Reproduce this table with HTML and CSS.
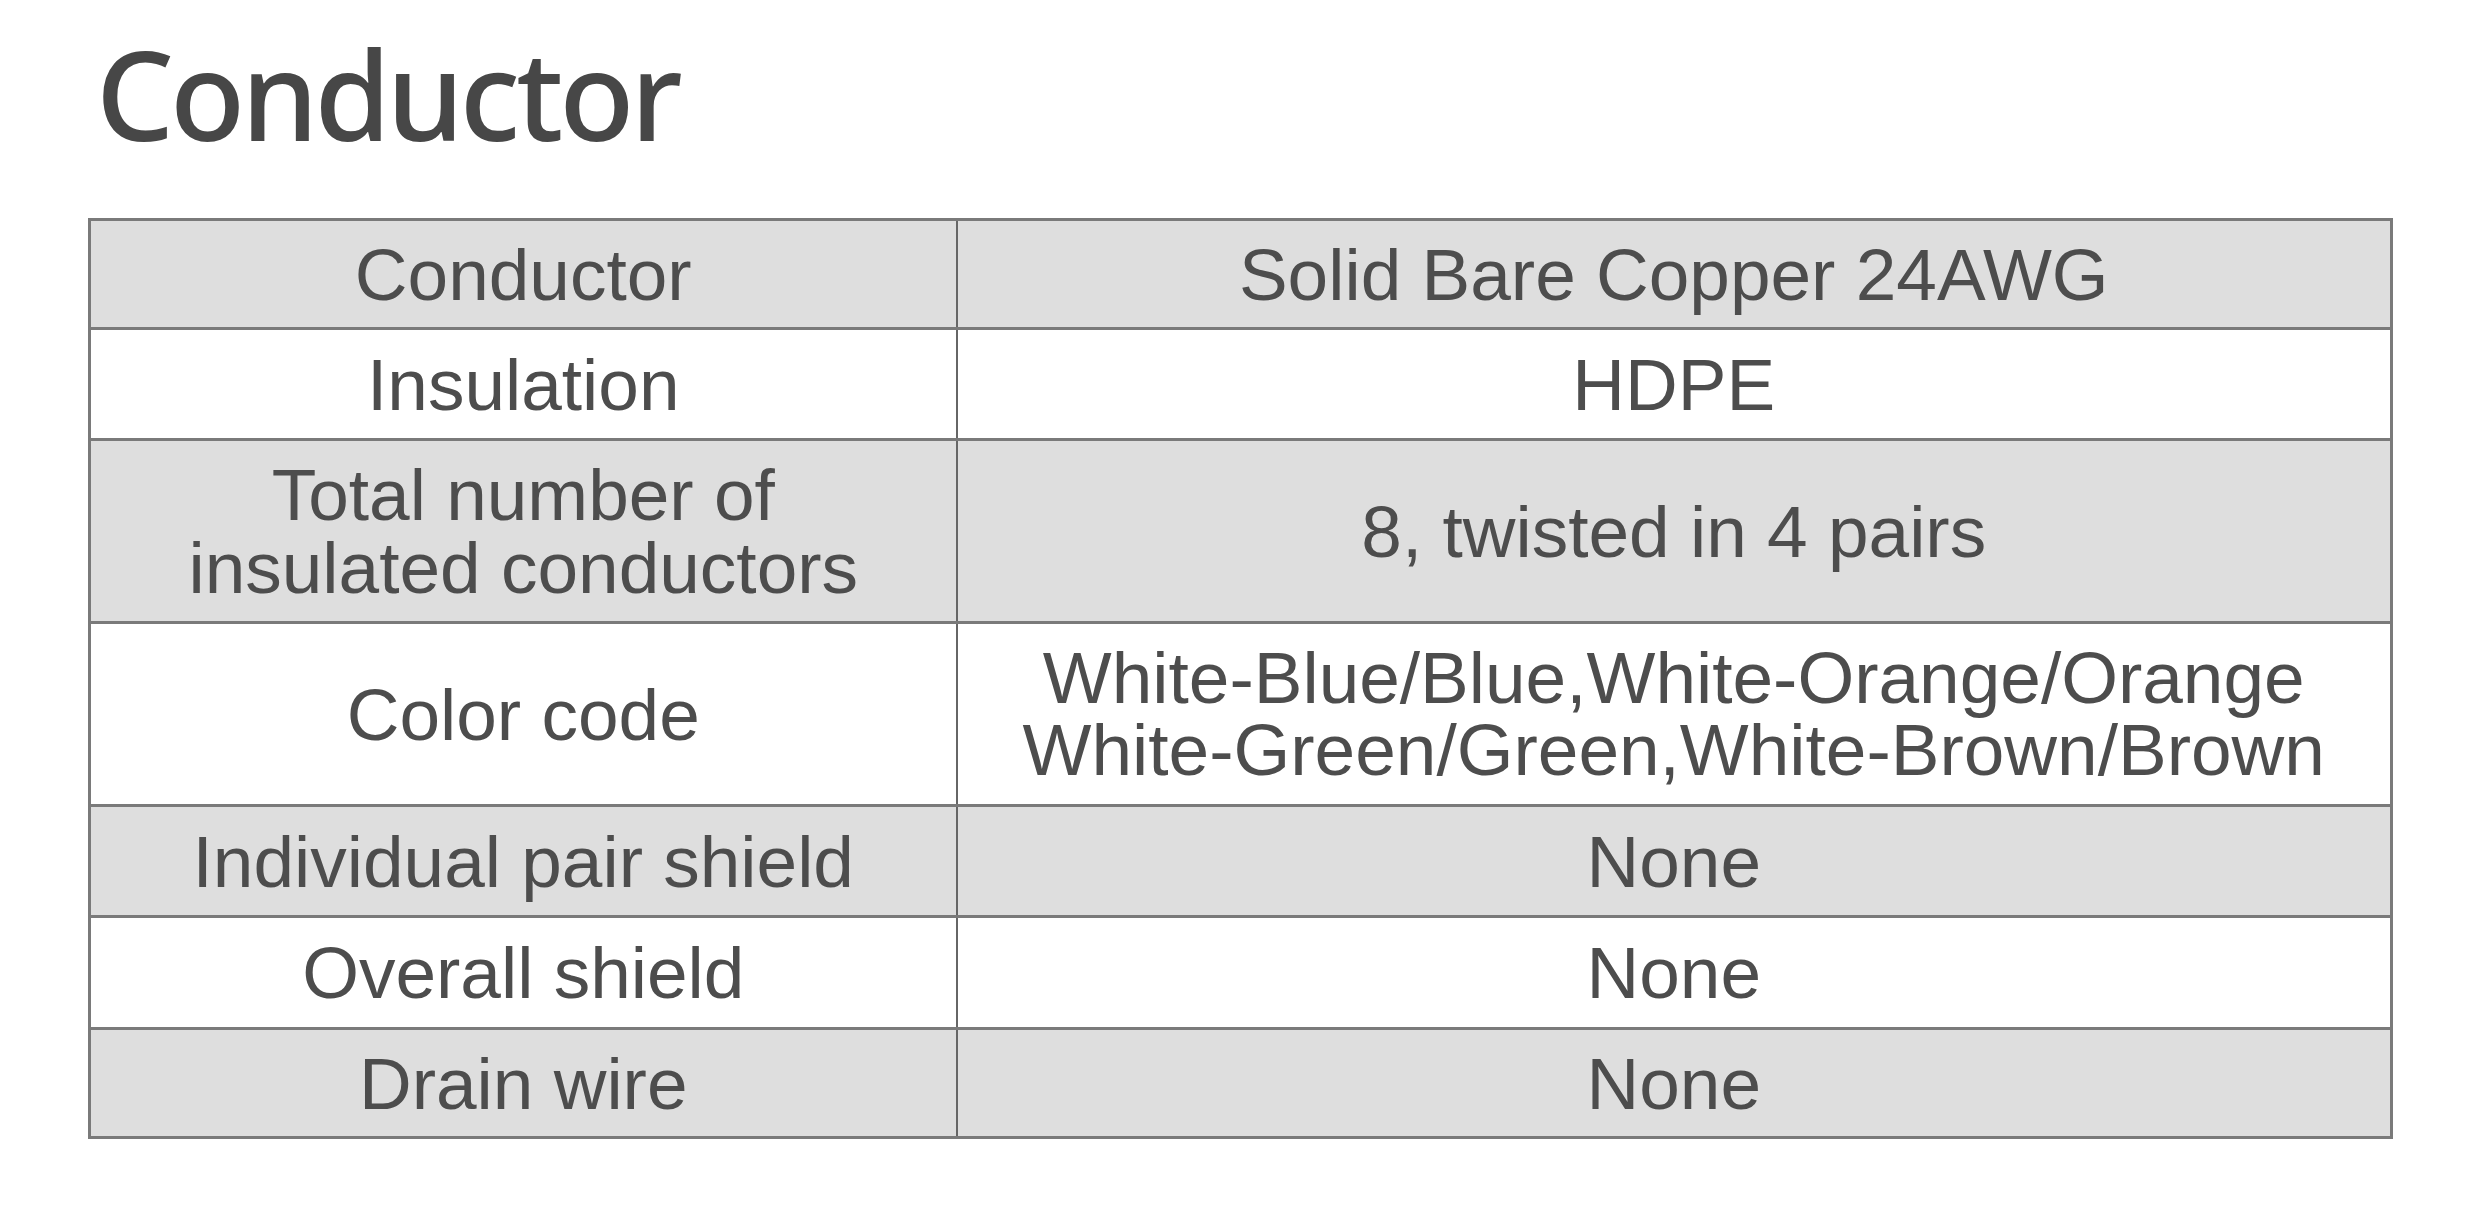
FILE: index.html
```html
<!DOCTYPE html>
<html lang="en">
<head>
<meta charset="utf-8">
<title>Conductor</title>
<link rel="stylesheet" href="styles.css">
</head>
<body>
<main class="page">
  <h1 class="title">Conductor</h1>
  <table class="spec">
    <colgroup>
      <col class="col-label">
      <col class="col-value">
    </colgroup>
    <tbody>
      <tr class="row shade single-a">
        <td class="label">Conductor</td>
        <td class="value">Solid Bare Copper 24AWG</td>
      </tr>
      <tr class="row single-b">
        <td class="label">Insulation</td>
        <td class="value">HDPE</td>
      </tr>
      <tr class="row shade double">
        <td class="label two-line">Total number of<br>insulated conductors</td>
        <td class="value">8, twisted in 4 pairs</td>
      </tr>
      <tr class="row double">
        <td class="label">Color code</td>
        <td class="value two-line wide">White-Blue/Blue,White-Orange/Orange<br>White-Green/Green,White-Brown/Brown</td>
      </tr>
      <tr class="row shade single-b">
        <td class="label">Individual pair shield</td>
        <td class="value">None</td>
      </tr>
      <tr class="row single-c">
        <td class="label">Overall shield</td>
        <td class="value">None</td>
      </tr>
      <tr class="row shade single-a">
        <td class="label">Drain wire</td>
        <td class="value">None</td>
      </tr>
    </tbody>
  </table>
</main>
</body>
</html>
```

FILE: styles.css
```css
html, body {
  margin: 0;
  padding: 0;
  background: #ffffff;
}

.page {
  padding: 32px 0 0 88px;
}

.title {
  margin: 0 0 62px 0;
  padding-left: 8px;
  font-family: "Noto Sans", "Open Sans", sans-serif;
  font-weight: 500;
  font-size: 123px;
  line-height: 124px;
  letter-spacing: -4px;
  color: #474747;
}

.spec {
  border-collapse: collapse;
  table-layout: fixed;
  width: 2302px;
  border: 3px solid #7a7a7a;
  font-family: "Liberation Sans", Arial, sans-serif;
  font-size: 73px;
  color: #4d4d4d;
}

.col-label {
  width: 867px;
}

.col-value {
  width: 1435px;
}

.row td {
  padding: 0;
  text-align: center;
  vertical-align: middle;
  line-height: 73px;
  border-top: 3px solid #7a7a7a;
  border-bottom: 3px solid #7a7a7a;
  white-space: nowrap;
}

.row .label {
  border-right: 2px solid #666666;
}

.shade td {
  background: #dedede;
}

.single-a td {
  height: 106px;
}

.single-b td {
  height: 108px;
}

.single-c td {
  height: 109px;
}

.double td {
  height: 180px;
}

.two-line {
  line-height: 66px;
}

.two-line.wide {
  line-height: 72px;
}
```
